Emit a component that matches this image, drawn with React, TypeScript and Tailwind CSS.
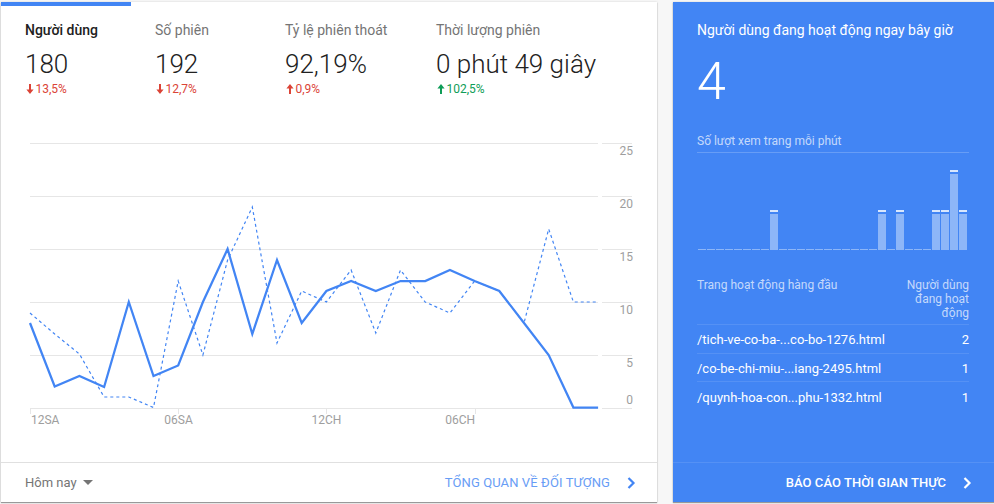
const xs = Array.from({ length: 24 }, (_, i) => 30 + i * 24.7);
const solid = [323, 386.5, 376, 387, 302, 376, 365.5, 302, 249, 334, 260, 323, 291, 281, 291, 281, 281, 270, 281, 291, 323, 355, 407.5, 407.5];
const dashed = [313, 334, 354, 397, 397, 407.5, 281, 355, 260, 207, 343, 291, 302, 270, 333, 270, 302, 313, 281, 291, 323, 229, 302, 302];
const pts = (a: number[]) => a.map((y, i) => `${xs[i].toFixed(1)},${y}`).join(" ");

const bars: Record<number, "tall" | "top"> = { 8: "tall", 20: "tall", 22: "tall", 26: "tall", 27: "tall", 28: "top", 29: "tall" };

function Arrow({ up, color }: { up?: boolean; color: string }) {
  return (
    <svg width="8" height="10" viewBox="0 0 8 10" className={up ? "rotate-180" : ""}>
      <path d="M3 0h2v5.5h2.6L4 10 .4 5.5H3z" fill={color} />
    </svg>
  );
}

function Metric({ label, value, delta, up, color, width, active }: { label: string; value: string; delta: string; up?: boolean; color: string; width: string; active?: boolean }) {
  return (
    <div className={`${width} h-full pl-6 border-t-4 ${active ? "border-[#4285f4]" : "border-transparent"}`}>
      <div className={`mt-[14px] text-[14px] leading-5 ${active ? "text-[#212121] font-medium" : "text-[#757575]"}`}>{label}</div>
      <div className="mt-[7px] text-[26px] leading-[34px] font-light text-[#212121] whitespace-nowrap">{value}</div>
      <div className="flex items-center gap-[1.5px] ml-px text-[12px] leading-4" style={{ color }}>
        <Arrow up={up} color={color} />
        <span>{delta}</span>
      </div>
    </div>
  );
}

function Chevron({ color }: { color: string }) {
  return (
    <svg width="9" height="12" viewBox="0 0 9 12" fill="none">
      <path d="M1.5 1l5 5-5 5" stroke={color} strokeWidth="2.2" />
    </svg>
  );
}

export default function App() {
  return (
    <div className="w-[994px] h-[504px] overflow-hidden bg-[#f7f7f7] flex items-start pt-[2px] pl-px gap-4 font-['Roboto',sans-serif]">
      <div className="w-[656px] h-[500px] bg-white flex flex-col shadow-[0_1px_1px_rgba(0,0,0,0.35),0_0_2px_rgba(0,0,0,0.15)]">
        <div className="flex h-[108px] shrink-0">
          <Metric active width="w-[130px]" label="Người dùng" value="180" delta="13,5%" color="#db4437" />
          <Metric width="w-[130px]" label="Số phiên" value="192" delta="12,7%" color="#db4437" />
          <Metric width="w-[151px]" label="Tỷ lệ phiên thoát" value="92,19%" delta="0,9%" up color="#db4437" />
          <Metric width="flex-1" label="Thời lượng phiên" value="0 phút 49 giây" delta="102,5%" up color="#0f9d58" />
        </div>
        <svg width="656" height="352" viewBox="1 110 656 352" className="block shrink-0">
          {[143, 196, 249, 302, 355, 408].map((y) => (
            <g key={y} stroke="#e6e6e6" strokeWidth="1">
              <line x1="30" x2="598" y1={y + 0.5} y2={y + 0.5} />
              <line x1="602" x2="632" y1={y + 0.5} y2={y + 0.5} />
            </g>
          ))}
          {[30, 178, 326, 475].map((x) => (
            <line key={x} x1={x + 0.5} x2={x + 0.5} y1="408" y2="414" stroke="#e6e6e6" />
          ))}
          <polyline points={pts(dashed)} fill="none" stroke="#4285f4" strokeWidth="1.2" strokeDasharray="3 3" />
          <polyline points={pts(solid)} fill="none" stroke="#4285f4" strokeWidth="2.25" />
          <g fontFamily="Roboto, sans-serif" fontSize="12" fill="#9e9e9e">
            {[["25", 155], ["20", 208], ["15", 261], ["10", 314], ["5", 367], ["0", 404]].map(([t, y]) => (
              <text key={t} x="633" y={y} textAnchor="end">{t}</text>
            ))}
            <text x="31" y="424">12SA</text>
            <text x="178.5" y="424" textAnchor="middle">06SA</text>
            <text x="326.5" y="424" textAnchor="middle">12CH</text>
            <text x="475" y="424" textAnchor="end">06CH</text>
          </g>
        </svg>
        <div className="h-[40px] border-t border-[#e0e0e0] flex items-center pl-6 pr-[21px] text-[13px]">
          <span className="text-[#757575]">Hôm nay</span>
          <svg width="10" height="5" viewBox="0 0 10 5" className="ml-[6px]">
            <path d="M0 0h10L5 5z" fill="#757575" />
          </svg>
          <span className="ml-auto text-[#4285f4] opacity-80 tracking-[0.1px]">TỔNG QUAN VỀ ĐỐI TƯỢNG</span>
          <span className="ml-[17px] flex"><Chevron color="#4285f4" /></span>
        </div>
      </div>

      <div className="w-[321px] h-[500px] bg-[#4285f4] flex flex-col text-white shadow-[0_1px_1px_rgba(0,0,0,0.35),0_0_2px_rgba(0,0,0,0.15)]">
        <div className="flex-1 pl-6 pr-[25px] pt-[18px]">
          <div className="text-[14px] leading-5">Người dùng đang hoạt động ngay bây giờ</div>
          <div className="mt-[12px] text-[52px] leading-[60px] font-light">4</div>
          <div className="mt-[21px] text-[12px] leading-4 pb-[3px] text-white/70 border-b border-white/20">Số lượt xem trang mỗi phút</div>
          <div className="mt-[17px] h-[80px] flex items-end gap-px pl-px">
            {Array.from({ length: 30 }, (_, i) => {
              const b = bars[i];
              return (
                <div key={i} className="w-2 flex flex-col">
                  {b ? <div className="h-[2px] mb-[2px] bg-white/80" /> : null}
                  <div className={`${b === "top" ? "h-[76px]" : b === "tall" ? "h-9" : "h-px"} bg-white/40`} />
                </div>
              );
            })}
          </div>
          <div className="mt-[28px] flex justify-between text-[12px] leading-[14px] text-white/70 pb-[4px] border-b border-white/10">
            <span>Trang hoạt động hàng đầu</span>
            <span className="w-[70px] text-right">Người dùng đang hoạt động</span>
          </div>
          {[["/tich-ve-co-ba-...co-bo-1276.html", "2"], ["/co-be-chi-miu-...iang-2495.html", "1"], ["/quynh-hoa-con...phu-1332.html", "1"]].map(([p, n], i) => (
            <div key={p} className={`flex justify-between items-center h-[28.5px] pt-[2px] text-[13px] ${i < 2 ? "border-b border-white/10" : ""}`}>
              <span>{p}</span>
              <span>{n}</span>
            </div>
          ))}
        </div>
        <div className="h-[40px] shrink-0 border-t border-white/10 flex items-center justify-end pr-[22px] text-[13px] font-medium tracking-[0.05px]">
          <span>BÁO CÁO THỜI GIAN THỰC</span>
          <span className="ml-[17px] flex"><Chevron color="#ffffff" /></span>
        </div>
      </div>
    </div>
  );
}
